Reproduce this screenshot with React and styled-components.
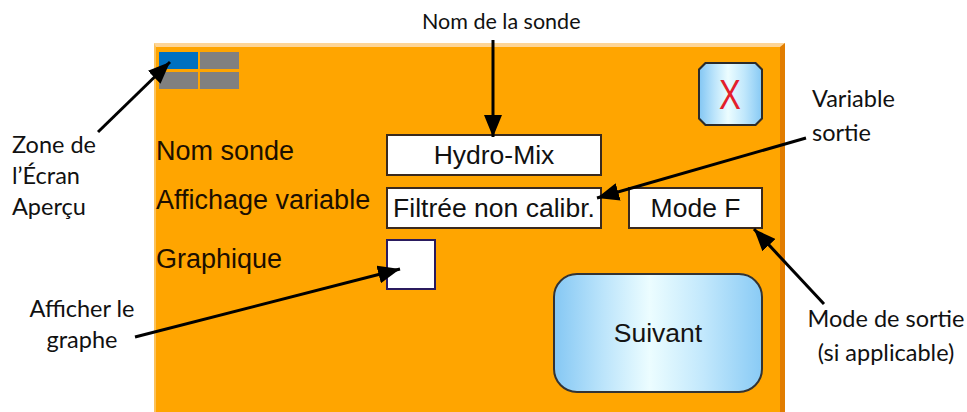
import React from "react";
import styled, { createGlobalStyle } from "styled-components";

const Global = createGlobalStyle`
    html, body {
        margin: 0;
        padding: 0;
        background: #ffffff;
        overflow: hidden;
    }
`

const Page = styled.div`
    position: relative;
    display: flex;
    width: 967px;
    height: 412px;
    overflow: hidden;
`

const Side = styled.div`
    display: flex;
    flex-direction: column;
    width: ${p => p.w}px;
    flex: none;
    padding-top: ${p => p.top}px;
    box-sizing: border-box;
`

const Note = styled.div`
    font-family: Lato, "Open Sans", sans-serif;
    font-size: ${p => p.fs || 23.5}px;
    line-height: ${p => p.lh || 31}px;
    color: #111;
    text-align: ${p => p.align || "left"};
    margin-top: ${p => p.mt || 0}px;
    padding-left: ${p => p.pl || 0}px;
    white-space: nowrap;
`

const Center = styled.div`
    display: flex;
    flex-direction: column;
    width: 631px;
    flex: none;
`

const Title = styled(Note)`
    height: 43px;
    padding-top: 5px;
    box-sizing: border-box;
    line-height: 32px;
`

const Panel = styled.div`
    flex: 1;
    box-sizing: border-box;
    background: #ffa500;
    border-top: 4px solid #fdd597;
    border-left: 2px solid #fcc25a;
    border-right: 5px solid #e27d00;
    padding: 0 17px 0 0;
    display: flex;
    flex-direction: column;
`

const Header = styled.div`
    display: flex;
    justify-content: space-between;
    align-items: flex-start;
`

const Tiles = styled.div`
    display: grid;
    grid-template-columns: 39px 39px;
    grid-template-rows: 17px 17px;
    gap: 3px 2px;
    margin: 5px 0 0 3px;
`

const Tile = styled.div`
    background: ${p => p.on ? "#0070c0" : "#808080"};
`

const glossy = `
    background: linear-gradient(90deg, #86c8f4 0%, #bde5fb 24%, #ecfdff 46%, #c2e8fc 72%, #8acbf5 100%);
`

const octagon = c => `polygon(${c}px 0, calc(100% - ${c}px) 0, 100% ${c}px, 100% calc(100% - ${c}px), calc(100% - ${c}px) 100%, ${c}px 100%, 0 calc(100% - ${c}px), 0 ${c}px)`

const CloseFrame = styled.div`
    width: 65px;
    height: 64px;
    margin-top: 15px;
    padding: 2px;
    box-sizing: border-box;
    background: #2b2b2b;
    clip-path: ${octagon(7)};
`

const CloseFace = styled.div`
    width: 100%;
    height: 100%;
    ${glossy}
    clip-path: ${octagon(6)};
    display: flex;
    align-items: center;
    justify-content: center;
    span {
        font-family: "Liberation Sans", Arial, sans-serif;
        font-size: 42px;
        line-height: 1;
        color: #e3202c;
        transform: scaleX(0.78);
        margin-top: 2px;
    }
`

const Row = styled.div`
    display: flex;
    align-items: flex-start;
    margin-top: ${p => p.mt}px;
`

const Label = styled.div`
    width: 230px;
    flex: none;
    font-family: "Liberation Sans", Arial, sans-serif;
    font-size: 27px;
    line-height: 27px;
    color: #1c0f00;
    padding-top: ${p => p.pt || 0}px;
    white-space: nowrap;
`

const Field = styled.div`
    width: ${p => p.w}px;
    height: 42px;
    box-sizing: border-box;
    background: #ffffff;
    border: 2px solid #3a2a1e;
    display: flex;
    align-items: center;
    justify-content: center;
    margin-left: ${p => p.ml || 0}px;
    font-family: "Liberation Sans", Arial, sans-serif;
    font-size: 26.5px;
    color: #111;
    white-space: nowrap;
    flex: none;
`

const Check = styled.div`
    width: 50px;
    height: 51px;
    box-sizing: border-box;
    background: #ffffff;
    border: 2px solid #2a1b5e;
    flex: none;
`

const NextButton = styled.div`
    margin-left: auto;
    margin-top: 34px;
    width: 210px;
    height: 120px;
    box-sizing: border-box;
    border: 2px solid #333;
    border-radius: 24px;
    ${glossy}
    display: flex;
    align-items: center;
    justify-content: center;
    font-family: "Liberation Sans", Arial, sans-serif;
    font-size: 26.5px;
    color: #141414;
`

const Arrows = styled.svg`
    position: absolute;
    left: 0;
    top: 0;
    pointer-events: none;
`

const lines = [
    [493, 40, 493, 137],
    [98, 132, 170, 62],
    [806, 138, 597, 198],
    [824, 304, 754, 229],
    [135, 337, 400, 269],
]

export default function App() {
    return (
        <Page>
            <Global />
            <Side w={154} top={129}>
                <Note pl={12}>Zone de<br />l’Écran<br />Aperçu</Note>
                <Note mt={71} pl={10} align="center">Afficher le<br />graphe</Note>
            </Side>
            <Center>
                <Title fs={21.5} pl={268}>Nom de la sonde</Title>
                <Panel>
                    <Header>
                        <Tiles>
                            <Tile on />
                            <Tile />
                            <Tile />
                            <Tile />
                        </Tiles>
                        <CloseFrame>
                            <CloseFace><span>X</span></CloseFace>
                        </CloseFrame>
                    </Header>
                    <Row mt={8}>
                        <Label pt={4}>Nom sonde</Label>
                        <Field w={216}>Hydro-Mix</Field>
                    </Row>
                    <Row mt={11}>
                        <Label>Affichage variable</Label>
                        <Field w={216}>Filtrée non calibr.</Field>
                        <Field w={135} ml={26}>Mode F</Field>
                    </Row>
                    <Row mt={10}>
                        <Label pt={7}>Graphique</Label>
                        <Check />
                        <NextButton>Suivant</NextButton>
                    </Row>
                </Panel>
            </Center>
            <Side w={182} top={81}>
                <Note lh={34} pl={27}>Variable<br />sortie</Note>
                <Note lh={34} mt={152} pl={20} align="center">Mode de sortie<br />(si applicable)</Note>
            </Side>
            <Arrows width="967" height="412">
                <defs>
                    <marker id="head" markerUnits="userSpaceOnUse" markerWidth="24" markerHeight="18"
                        refX="22" refY="9" orient="auto">
                        <path d="M0,0 L22,9 L0,18 z" fill="#000" />
                    </marker>
                </defs>
                {lines.map(([x1, y1, x2, y2], i) => (
                    <line key={i} x1={x1} y1={y1} x2={x2} y2={y2}
                        stroke="#000" strokeWidth="3" markerEnd="url(#head)" />
                ))}
            </Arrows>
        </Page>
    )
}
